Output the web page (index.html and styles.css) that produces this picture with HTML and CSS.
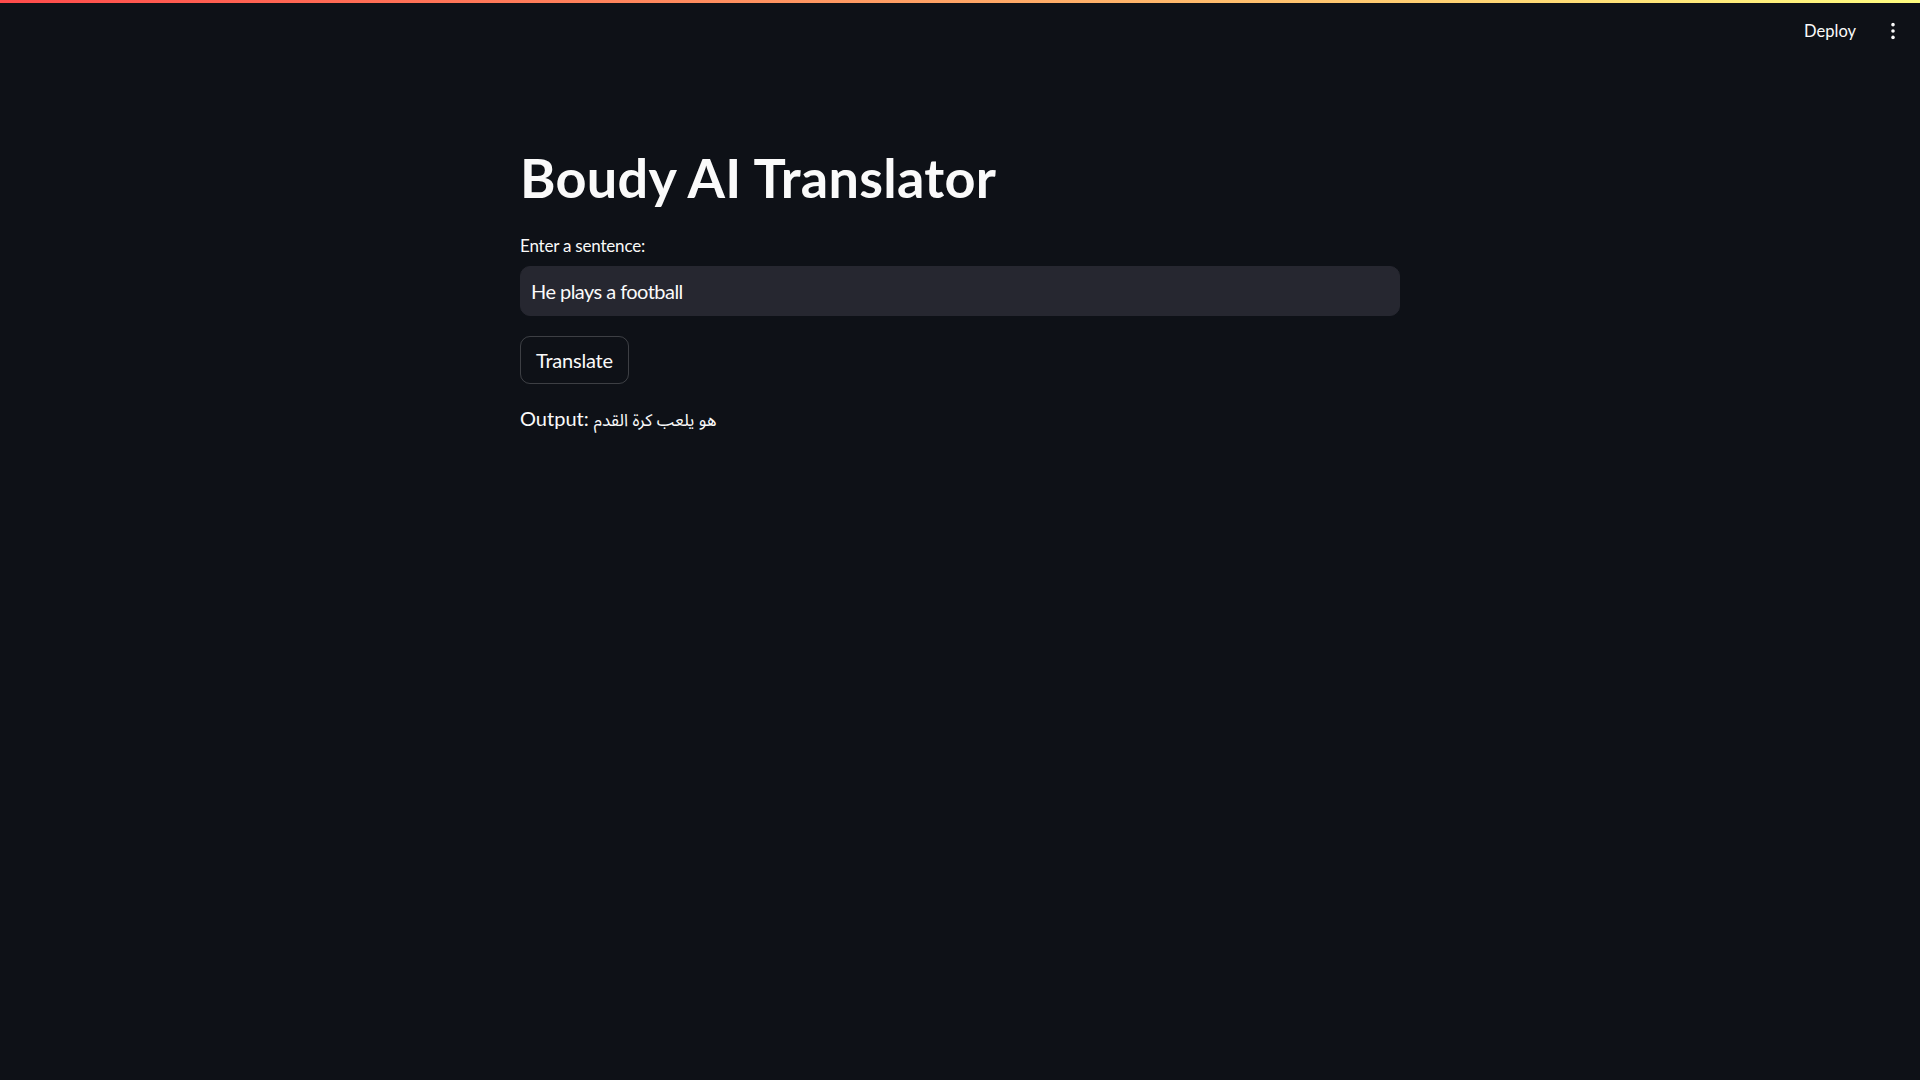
FILE: index.html
```html
<!DOCTYPE html>
<html lang="en">
<head>
<meta charset="utf-8">
<title>Boudy AI Translator</title>
<link rel="stylesheet" href="styles.css">
</head>
<body>
<div class="decoration"></div>
<header class="header">
  <span class="deploy">Deploy</span>
  <svg class="menu" width="20" height="20" viewBox="0 0 20 20" aria-hidden="true">
    <circle cx="10" cy="2.5" r="2.1" fill="#fafafa"/>
    <circle cx="10" cy="10" r="2.1" fill="#fafafa"/>
    <circle cx="10" cy="17.5" r="2.1" fill="#fafafa"/>
  </svg>
</header>
<main class="main">
  <div class="block">
    <h1 class="title">Boudy AI Translator</h1>
    <div class="field">
      <label class="label">Enter a sentence:</label>
      <div class="input">He plays a football</div>
    </div>
    <div class="row"><button class="btn">Translate</button></div>
    <p class="output">Output: <span class="ar" lang="ar">هو يلعب كرة القدم</span></p>
  </div>
</main>
</body>
</html>
```
FILE: styles.css
```css
html, body {
  margin: 0;
  padding: 0;
  background: #0e1117;
  color: #fafafa;
  font-family: Lato, "DejaVu Sans", sans-serif;
}
.decoration {
  height: 3px;
  background: linear-gradient(90deg, rgb(255, 75, 75), rgb(255, 253, 128));
}
.header {
  height: 55px;
  display: flex;
  justify-content: flex-end;
  align-items: center;
  padding-right: 17px;
  gap: 27px;
}
.deploy {
  font-size: 16.5px;
  line-height: 24px;
  color: #fafafa;
}
.menu {
  display: block;
  width: 20px;
  height: 20px;
  transform: scale(0.85);
}
.main {
  display: flex;
  justify-content: center;
}
.block {
  width: 880px;
  padding-top: 88px;
  display: flex;
  flex-direction: column;
  gap: 20px;
}
.title {
  margin: 0 0 2px 0;
  font-size: 54px;
  font-weight: 700;
  line-height: 1.2;
  letter-spacing: 0.3px;
}
.field {
  display: flex;
  flex-direction: column;
  gap: 7px;
}
.label {
  font-size: 17px;
  line-height: 26px;
  letter-spacing: -0.2px;
}
.input {
  box-sizing: border-box;
  height: 50px;
  background: #262730;
  border: 1px solid #262730;
  border-radius: 10px;
  padding: 0 10px;
  display: flex;
  align-items: center;
  font-size: 20px;
  letter-spacing: -0.55px;
}
.row {
  display: flex;
}
.btn {
  box-sizing: border-box;
  height: 48px;
  padding: 0 15px;
  background: transparent;
  color: #fafafa;
  border: 1px solid rgba(250, 250, 250, 0.2);
  border-radius: 10px;
  font-family: Lato, sans-serif;
  font-size: 20px;
  letter-spacing: -0.2px;
}
.output {
  margin: -2px 0 0 0;
  font-size: 20px;
  line-height: 32px;
}
.ar {
  font-family: "Noto Sans Arabic", "DejaVu Sans Condensed", "DejaVu Sans", sans-serif;
  font-stretch: condensed;
  font-size: 17px;
}
```
